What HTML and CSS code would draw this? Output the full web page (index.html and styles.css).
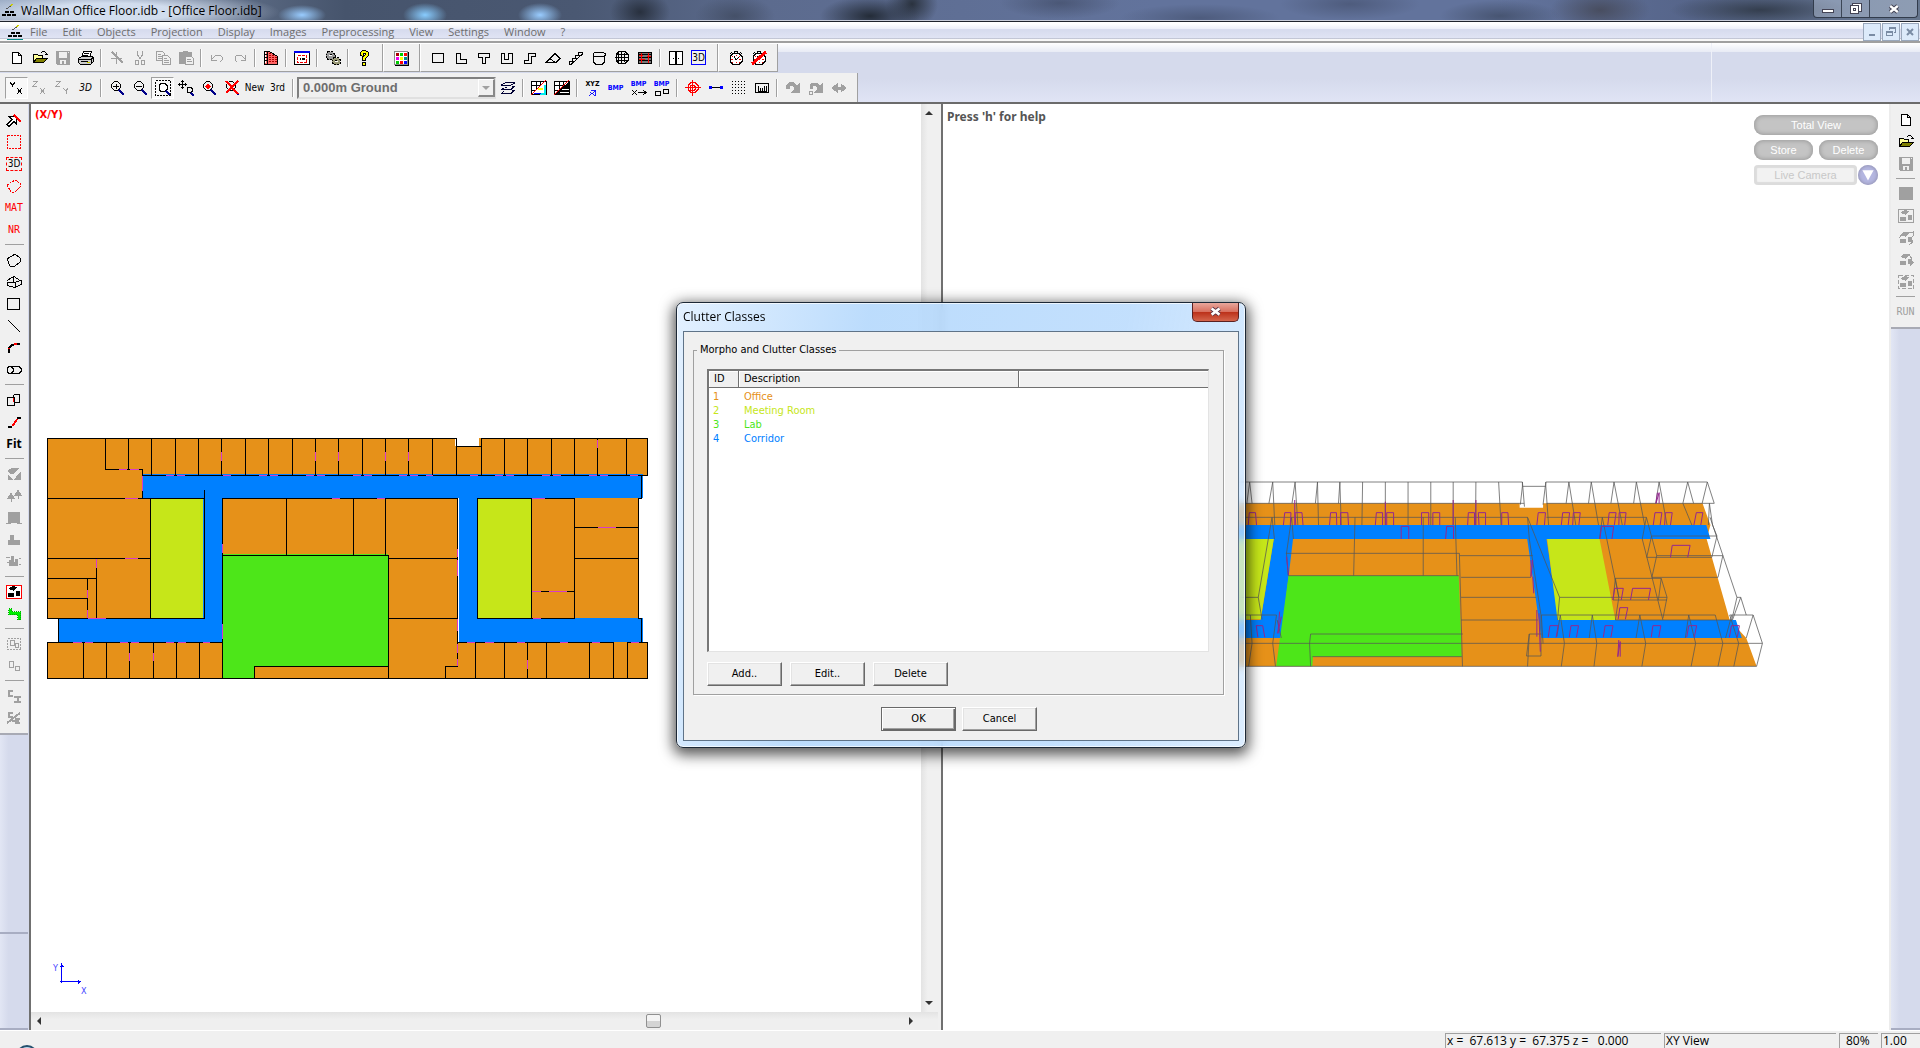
FILE: index.html
```html
<!DOCTYPE html>
<html lang="en">
<head>
<meta charset="utf-8">
<title>WallMan Office Floor.idb - [Office Floor.idb]</title>
<link rel="stylesheet" href="styles.css">
</head>
<body>
<svg class="defs" aria-hidden="true">
  <symbol id="new" viewBox="0 0 16 16"><path fill="#fff" d="M3.5 2.5h6l3 3v8h-9zM9.500 2.500v3h3"/></symbol>
  <symbol id="open" viewBox="0 0 16 16"><path fill="#ff9" d="M1.500 12.500v-8h4l1 1h4v3"/><path fill="#808000" d="M1.500 12.500l3-4h11l-4 4z"/><path d="M9 2.500h1M10 1.500h3M13 2.500h1M14 3.500h1M13 4.500h3"/></symbol>
  <symbol id="save" viewBox="0 0 16 16"><path fill="currentColor" stroke="none" fill-rule="evenodd" d="M1 1h14v14H2l-1-1zM4 2v6h8V2zM5 10v4h2v-3h2v3h2v-4zM13 2v1h1V2z"/></symbol>
  <symbol id="lens" viewBox="0 0 16 16"><path d="M5.500 1.500h3l3 3v3l-3 3h-3l-3-3v-3z"/><path stroke="#008" stroke-width="2" d="M10 10l5 5"/></symbol>
  <symbol id="clock" viewBox="0 0 16 16"><path fill="#fff" d="M5 3.500h6l3 3v5l-3 3H5l-3-3v-5z"/><path d="M6.500 1.500h3v2h-3zM1.500 4.500l2-2M14.500 4.500l-2-2"/><path stroke="#e00" d="M8 5v1M8 12v1M3 9.500h2M11 9.500h2M4 6.500h1M11 6.500h1M4 12.500h1M11 12.500h1"/><path d="M8 9.500h1M8 9.500l-2-3M9 9l2-2"/></symbol>
  <symbol id="bld" viewBox="0 0 16 16"><path fill="currentColor" stroke="none" d="M2 5l5-3 4 1-3 4zM2 9h6v4H2zM10 7h4v5h-4z"/></symbol>
  <symbol id="brick" viewBox="0 0 16 16"><path stroke="none" fill="#000" d="M4 8h4v2H4zM9 8h4v2H9zM1 11h4v2H1zM6 11h4v2H6zM11 11h4v2h-4z"/><path stroke="#555" d="M5 6l5-3"/><path stroke="#cc0" d="M9 3l3-2"/></symbol>
</svg>

<header class="title">
  <svg class="i"><use href="#brick"/></svg>
  <h1>WallMan Office Floor.idb - [Office Floor.idb]</h1>
  <div class="caption">
    <button aria-label="Minimize"><svg class="i" viewBox="0 0 16 16"><path fill="#fff" stroke="#445" d="M2.500 8.500h11v3h-11z"/></svg></button>
    <button aria-label="Restore"><svg class="i" viewBox="0 0 16 16"><path fill="#fff" stroke="#445" fill-rule="evenodd" d="M4.500 2.500h9v8h-9z"/><path fill="#fff" stroke="#445" d="M2.500 4.500h8v8h-8zM5.500 7.500h2v2h-2z"/></svg></button>
    <button class="wide" aria-label="Close"><svg class="i smooth" viewBox="0 0 16 16"><path stroke="#445" stroke-width="6" d="M3 4l10 8M13 4l-10 8"/><path stroke="#fff" stroke-width="3" d="M3 4l10 8M13 4l-10 8"/></svg></button>
  </div>
</header>

<nav class="menu">
  <svg class="i"><use href="#brick"/><path stroke="#088" d="M0 15.500h16"/></svg>
  <button>File</button><button>Edit</button><button>Objects</button><button>Projection</button><button>Display</button><button>Images</button><button>Preprocessing</button><button>View</button><button>Settings</button><button>Window</button><button>?</button>
  <div class="mdi">
    <button aria-label="Minimize document"><svg class="i" viewBox="0 0 16 16"><path stroke-width="2" d="M5 11h6"/></svg></button>
    <button aria-label="Restore document"><svg class="i" viewBox="0 0 16 16"><path d="M6.500 6v-2.500h6v5H11M6 4.500h7M3.500 7.500h6v4h-6zM3 8.500h7"/></svg></button>
    <button aria-label="Close document"><svg class="i smooth" viewBox="0 0 16 16"><path stroke-width="2" d="M5 5l6 6M11 5l-6 6"/></svg></button>
  </div>
</nav>

<div class="rebar">
<div class="row">
  <div class="band">
    <button aria-label="New"><svg class="i"><use href="#new"/></svg></button>
    <button aria-label="Open"><svg class="i"><use href="#open"/></svg></button>
    <button aria-label="Save" disabled><svg class="i"><use href="#save"/></svg></button>
    <button aria-label="Print"><svg class="i" viewBox="0 0 16 16"><path fill="#fff" d="M5.500 1.500h8l-2 6h-8zM6 3.500h5M5 5.500h5"/><path fill="#ccc" d="M.5 8.500l3-2h11l1 2v3l-3 3h-10l-2-2zM1 9.500h12v4M13 9.500l2-2M3 11.500h7"/><path stroke="#cc0" d="M9 12.500h3"/></svg></button>
    <hr>
    <button aria-label="Cut wall" disabled><svg class="i" viewBox="0 0 16 16"><path stroke-width="2" d="M3 2l5 5M8 7l6 6"/><path d="M7.500 2v12M2 8.500h11"/></svg></button>
    <button aria-label="Cut" disabled><svg class="i" viewBox="0 0 16 16"><path d="M5.500 1v4l3 4M10.500 1v4l-3 4M3.500 10.500h3v4h-3zM9.500 10.500h3v4h-3z"/></svg></button>
    <button aria-label="Copy" disabled><svg class="i" viewBox="0 0 16 16"><path d="M1.500 1.500h6l2 2v7h-8zM3 4.500h3M3 6.500h4M3 8.500h4"/><path fill="#f0f0f0" d="M7.500 5.500h5l3 3v6h-8zM9 8.500h3M9 10.500h5M9 12.500h5"/></svg></button>
    <button aria-label="Paste" disabled><svg class="i" viewBox="0 0 16 16"><path fill="currentColor" d="M1.500 2.500h12v11h-12zM5 1.500h5"/><path fill="#f0f0f0" d="M7.500 6.500h6l2 2v6h-8zM9 9.500h4M9 11.500h5"/></svg></button>
    <hr>
    <button aria-label="Undo" disabled><svg class="i" viewBox="0 0 16 16"><path d="M2.500 5v5h5M3 9l3-3 2-1h3l2 2v3l-2 2"/></svg></button>
    <button aria-label="Redo" disabled><svg class="i" viewBox="0 0 16 16"><path d="M13.500 5v5h-5M13 9l-3-3-2-1H5L3 7v3l2 2"/></svg></button>
    <hr>
    <button aria-label="Building"><svg class="i" viewBox="0 0 16 16"><path fill="#f66" d="M1.500 1.500h5l8 5v8h-13z"/><path stroke="#a00" stroke-dasharray="2 1" d="M6 3.500h2M6 5.500h5M6 7.500h8M6 9.500h8M6 11.500h8"/><path stroke="#fff" d="M2.500 2v2M2.500 5v2M2.500 8v2M2.500 11v2"/><path d="M4.500 2v12M2 4.500h2M2 7.500h2M2 10.500h2"/></svg></button>
    <hr>
    <button aria-label="Window settings"><svg class="i" viewBox="0 0 16 16"><path fill="#fff" d="M.5 1.500h15v13H.5z"/><path stroke="#00e" stroke-width="2" d="M0 2h16"/><path stroke="#e00" stroke-dasharray="3 1" d="M3.500 5.500h9v7h-9z"/><path stroke-width="2" d="M6 9h1M8 9h3"/></svg></button>
    <hr>
    <button aria-label="Preferences"><svg class="i" viewBox="0 0 16 16"><path fill="#999" stroke-dasharray="2 1" d="M3 1.500h4l3 3v3l-3 2H3l-2-2v-4z"/><path fill="#997" stroke-dasharray="2 1" d="M9 7.500h4l2 2v4l-2 1H9l-2-2v-3z"/><path stroke="#fff" d="M4 5.500h3M10 11.500h3"/><path d="M5 4.500h2M10 10.500h2"/></svg></button>
    <hr>
    <button aria-label="Help"><svg class="i" viewBox="0 0 16 16"><path fill="#ff0" d="M4.500 5.500v-3l2-2h3l3 2v3l-3 3v2h-3v-3l3-3v-1h-2v3zM6.500 12.500h3v3h-3z"/></svg></button>
  </div>
  <div class="band">
    <button aria-label="Materials"><svg class="i" viewBox="0 0 16 16"><path fill="#fff" stroke="#888" d="M1.500 1.500h13v13h-13z"/><g stroke="none"><path fill="#a00" d="M3 3h3v3H3z"/><path fill="#0c0" d="M7 3h3v3H7zM3 11h3v3H3z"/><path fill="#e0e" d="M3 7h3v3H3z"/><path fill="#ff0" d="M7 7h3v3H7z"/><path fill="#f00" d="M11 3h3v3h-3zM7 11h3v3H7z"/><path fill="#088" d="M11 7h3v3h-3z"/><path fill="#00f" d="M11 11h3v3h-3z"/></g><path d="M15.500 2v13.500H2"/></svg></button>
  </div>
  <div class="band">
    <button aria-label="Rectangle"><svg class="i" viewBox="0 0 16 16"><path d="M2.500 3.500h11v9h-11z"/></svg></button>
    <button aria-label="L shape"><svg class="i" viewBox="0 0 16 16"><path d="M3.500 3.500h4v6h6v4h-10z"/></svg></button>
    <button aria-label="T shape"><svg class="i" viewBox="0 0 16 16"><path d="M2.500 3.500h11v4h-4v6h-3v-6h-4z"/></svg></button>
    <button aria-label="U shape"><svg class="i" viewBox="0 0 16 16"><path d="M2.500 3.500h3v6h4v-6h4v10h-11z"/></svg></button>
    <button aria-label="Z shape"><svg class="i" viewBox="0 0 16 16"><path d="M6.500 3.500h7v3h-4v7h-7v-3h4z"/></svg></button>
    <button aria-label="Roof"><svg class="i" viewBox="0 0 16 16"><path d="M1 12.500l9-9 5 5-4 4zM1 12.500h11M5 8.500l5 4"/></svg></button>
    <button aria-label="Stairs"><svg class="i" viewBox="0 0 16 16"><path d="M1.500 14v-3h3v-3h3v-3h3v-3h4v2l-11 10zM4 11.500h3M7 8.500h3M10 5.500h3"/></svg></button>
    <button aria-label="Cylinder"><svg class="i" viewBox="0 0 16 16"><path d="M4 2.500h8l2 1v2l-2 1H4l-2-1v-2zM2.500 5v7l2 2h7l2-2V5"/></svg></button>
    <button aria-label="Sphere"><svg class="i" viewBox="0 0 16 16"><path d="M5 1.500h6l3 3v6l-3 3H5l-3-3v-6zM1 7.500h14M3 4.500h10M3 10.500h10M7.500 1v13M4.500 3v9M10.500 3v9"/></svg></button>
    <button aria-label="Walls"><svg class="i" viewBox="0 0 16 16"><path fill="#777" d="M1.500 2.500h13v11h-13zM2 4.500h13M2 7.500h13M2 10.500h13"/><path stroke="#f00" d="M2 5.500h4M4.500 3v10M11.500 3v10M10 6.500h4M2 9.500h6"/></svg></button>
    <hr>
    <button aria-label="Door"><svg class="i" viewBox="0 0 16 16"><path fill="#fff" d="M1.500 1.500h13v13h-13zM7.500 2v12M8.500 2v12M5 8.500h1M10 8.500h1"/></svg></button>
    <button aria-label="3D view" class="boxed">3D</button>
  </div>
  <div class="band">
    <button aria-label="Start timer"><svg class="i"><use href="#clock"/></svg></button>
    <button aria-label="Stop timer"><svg class="i" viewBox="0 0 16 16"><use href="#clock"/><path stroke="#f00" stroke-width="3" d="M1 14L15 2"/></svg></button>
  </div>
</div>
<div class="row second">
  <div class="band">
    <button aria-label="XY" class="on"><svg class="i" viewBox="0 0 16 16"><path d="M1.500 2v1l2 2v2M5.500 2v1l-2 2M8 8l5 6M13 8l-5 6"/></svg></button>
    <button aria-label="XZ" disabled><svg class="i" viewBox="0 0 16 16"><path d="M1 1.500h4L1 6.500h4M8 8l5 6M13 8l-5 6"/></svg></button>
    <button aria-label="YZ" disabled><svg class="i" viewBox="0 0 16 16"><path d="M1 1.500h4L1 6.500h4M8 8l3 3v3M13 8l-2 3"/></svg></button>
    <button class="tx it">3D</button>
    <hr>
    <button aria-label="Zoom in"><svg class="i" viewBox="0 0 16 16"><use href="#lens"/><path d="M4 6.500h6M7.500 4v5"/></svg></button>
    <button aria-label="Zoom out"><svg class="i" viewBox="0 0 16 16"><use href="#lens"/><path d="M4 6.500h6"/></svg></button>
    <button aria-label="Zoom window" class="on"><svg class="i" viewBox="0 0 16 16"><path stroke-dasharray="2 1" d="M.5.5h15v15H.5z"/><path fill="#fff" d="M6 3.500h4l2 2v4l-2 2H6l-2-2v-4z"/><path stroke="#008" stroke-width="2" d="M11 11l4 4"/></svg></button>
    <button aria-label="Pan"><svg class="i" viewBox="0 0 16 16"><path d="M4.500 0v9M0 4.500h9M3 1.500h3M3 7.500h3M1.500 3v3M7.500 3v3M10 7.500h3l1 1v3l-1 1h-3l-1-1v-3z"/><path stroke="#008" stroke-width="2" d="M13 13l3 3"/></svg></button>
    <button aria-label="Zoom point"><svg class="i" viewBox="0 0 16 16"><use href="#lens"/><path fill="#f00" stroke="#f00" d="M7 4.500l2 2-2 2-2-2z"/></svg></button>
    <button aria-label="Zoom off"><svg class="i" viewBox="0 0 16 16"><use href="#lens"/><path stroke="#f00" stroke-width="2" d="M2 1l12 13M14 1L2 13"/></svg></button>
    <button class="tx">New</button>
    <button class="tx">3rd</button>
    <hr>
    <div class="combo"><select aria-label="Floor" disabled><option>0.000m Ground</option></select><span></span></div>
    <button aria-label="Layers"><svg class="i" viewBox="0 0 16 16"><path stroke="#003" d="M5 2.500h10M1 5.500h10M14.500 3l-3 2M4.500 3l-3 2M5 7.500h2M1 9.500h10M14 6.500l-3 3M4 8l-3 2M1 13.500h10M14 10.500l-3 3M4 11.500l-3 2M12 6.500h3M12 10.500h3"/></svg></button>
    <hr>
    <button aria-label="Color fill"><svg class="i" viewBox="0 0 16 16"><path fill="#fff" d="M.5 1.500h15v13H.5zM1 5.500h9M5.500 2v8M9.500 2v4M1 10.500h4"/><path stroke="#ff0" stroke-width="2" d="M7 9h5"/><path stroke="#0ee" stroke-width="2" d="M14 5v9H9"/><path stroke="#00f" d="M3 13.500h7"/><path stroke="#f00" d="M0 15L15 0"/></svg></button>
    <button aria-label="Dark fill"><svg class="i" viewBox="0 0 16 16"><path fill="#fff" d="M.5 1.500h15v13H.5zM1 5.500h9M5.500 2v8M9.500 2v4M1 10.500h4"/><path fill="#000" d="M15 2v12H2z"/><path stroke="#fff" d="M8 9.500h7M6 12.500h9"/><path stroke="#f00" d="M0 15L15 0"/></svg></button>
    <hr>
    <button aria-label="XYZ" class="st"><span class="k">XYZ</span><svg class="i" viewBox="0 2 16 9"><path stroke="#00f" d="M3 11l8-6M6 4.500h5v5M5 7l6 4"/></svg></button>
    <button class="st">BMP</button>
    <button class="st" aria-label="BMP scale">BMP<svg class="i" viewBox="0 0 16 8"><path d="M1 2l5 5M6 2L1 7M7 4.500h8M12 2l3 2.500L12 7"/></svg></button>
    <button class="st" aria-label="BMP copy">BMP<svg class="i" viewBox="0 0 16 8"><path d="M1.500 3.500h5v4h-5zM9.500 1.500h5v4h-5z"/></svg></button>
    <hr>
    <button aria-label="Target"><svg class="i" viewBox="0 0 16 16"><path stroke="#f00" d="M6 2.500h4l3 3v4l-3 3H6l-3-3v-4zM0 7.500h16M7.500 0v16M6 5.500h3l1 1v3l-1 1H6l-1-1v-3z"/></svg></button>
    <button aria-label="Measure"><svg class="i" viewBox="0 0 16 16"><path stroke="#000" d="M3 7.500h10"/><path stroke="#00f" stroke-width="3" d="M1 7.500h3M12 7.500h3"/></svg></button>
    <button aria-label="Grid"><svg class="i" viewBox="0 0 16 16"><path stroke-dasharray="1 2" d="M1 1.500h14M1 4.500h14M1 7.500h14M1 10.500h14M1 13.500h14"/></svg></button>
    <button aria-label="Ruler"><svg class="i" viewBox="0 0 16 16"><path d="M1.500 3.500h13v9h-13zM4.500 6v5M6.500 8v3M8.500 8v3M10.500 6v5M12.500 6v5M4 11.500h9"/></svg></button>
    <hr>
    <button aria-label="Rotate" disabled><svg class="i" viewBox="0 0 16 16"><path stroke-width="4" d="M3 9V6l2-2h3l3 3"/><path fill="currentColor" d="M14 4v8H7z"/></svg></button>
    <button aria-label="Rotate around point" disabled><svg class="i" viewBox="0 0 16 16"><path stroke-width="3" d="M3 9V6l2-2h3l3 3"/><path fill="currentColor" d="M14 4v8H7z"/><path d="M1.500 11.500h3v3h-3z"/></svg></button>
    <button aria-label="Mirror" disabled><svg class="i" viewBox="0 0 16 16"><path fill="currentColor" d="M1 8l5-4v3h4V4l5 4-5 4V9H6v3z"/></svg></button>
  </div>
</div>
</div>

<main>
  <aside class="side left">
    <div class="tools">
    <button aria-label="Select"><svg class="i" viewBox="0 0 16 16"><path fill="#fff" d="M3 4.500h7v7l-2-2-5 5-2-2 5-5z"/><path stroke="#f00" stroke-width="2" d="M8 3l7 7"/></svg></button>
    <button aria-label="Select rectangle"><svg class="i" viewBox="0 0 16 16"><path stroke="#f00" stroke-dasharray="2 1" d="M1.500 1.500h13v13h-13z"/></svg></button>
    <button class="dash">3D</button>
    <button aria-label="Select polygon"><svg class="i" viewBox="0 0 16 16"><path stroke="#f00" stroke-dasharray="2 1" d="M1 7l8-5 5 3v4l-5 5H5z"/></svg></button>
    <button class="tx red">MAT</button>
    <button class="tx red">NR</button>
    <hr>
    <button aria-label="Polygon"><svg class="i" viewBox="0 0 16 16"><path d="M1 7l8-5 5 4v4l-5 4H4z"/></svg></button>
    <button aria-label="Prism"><svg class="i" viewBox="0 0 16 16"><path d="M1 6.500l7-4 6 4-5 2H1v3l8 2 6-3V6M9.500 8v5M7.500 3v5"/></svg></button>
    <button aria-label="Square"><svg class="i" viewBox="0 0 16 16"><path d="M1.500 2.500h12v11h-12z"/></svg></button>
    <button aria-label="Line"><svg class="i" viewBox="0 0 16 16"><path d="M2 2l12 12"/></svg></button>
    <button aria-label="Arc"><svg class="i" viewBox="0 0 16 16"><path stroke-width="2" d="M3 13V8l3-3 4-1h4"/><path stroke="#f00" stroke-width="2" d="M3 9v-1M8 4h3"/></svg></button>
    <button aria-label="Tube"><svg class="i" viewBox="0 0 16 16"><path d="M3 4.500h10l2 2v3l-2 2H3l-2-2v-3zM5 4.500l2 2v3l-2 2"/></svg></button>
    <hr>
    <button aria-label="Copy object"><svg class="i" viewBox="0 0 16 16"><path d="M1.500 5.500h7v8h-7zM7.500 2.500h6v8h-5M7.500 3v3"/><path stroke="#f00" d="M7.500 6v4"/></svg></button>
    <button aria-label="Move corner"><svg class="i" viewBox="0 0 16 16"><path stroke-width="2" d="M2 13h4M11 4h4"/><path stroke="#f00" stroke-width="2" d="M6 12l2-2 3-5"/></svg></button>
    <button class="tx big">Fit</button>
    <hr>
    <button aria-label="Terrain" disabled><svg class="i" viewBox="0 0 16 16"><path fill="currentColor" d="M2 5l5-3h6l-5 5H4zM2 9l4 4H2zM14 7v6H9z"/></svg></button>
    <button aria-label="Trees" disabled><svg class="i" viewBox="0 0 16 16"><path fill="currentColor" d="M5 5l3 5H2zM12 2l3 5H9zM5.500 10v4M12.500 7v4"/></svg></button>
    <button aria-label="House" disabled><svg class="i" viewBox="0 0 16 16"><path fill="currentColor" d="M2.500 2.500h11v10h-11zM0 13.500h5M11 13.500h5"/></svg></button>
    <button aria-label="City" disabled><svg class="i" viewBox="0 0 16 16"><path fill="currentColor" d="M2.500 12.500v-4h2v-5h3v5h6v4z"/></svg></button>
    <button aria-label="City cut" disabled><svg class="i" viewBox="0 0 16 16"><path fill="currentColor" d="M3.500 6.500v5h8v-6h-2v3h-2v-6h-2v4zM0 3.500h4M13 4.500h2M1 8.500h3M13 10.500h2"/></svg></button>
    <hr>
    <button aria-label="Preview"><svg class="i" viewBox="0 0 16 16"><path fill="#fff" stroke="#f00" d="M.5 1.500h15v13H.5z"/><use href="#bld"/></svg></button>
    <button aria-label="Corridor"><svg class="i" viewBox="0 0 16 16"><path fill="#0e0" stroke="#0a0" stroke-dasharray="1 1" d="M2.500 2.500h3v3h9v8h-3v-5h-9z"/></svg></button>
    <hr>
    <button aria-label="Group" disabled><svg class="i" viewBox="0 0 16 16"><path stroke-dasharray="2 1" d="M1.500 2.500h13v11h-13z"/><path d="M4.500 4.500h4v5h-4zM9.500 7.500h3v4h-3z"/></svg></button>
    <button aria-label="Ungroup" disabled><svg class="i" viewBox="0 0 16 16"><path d="M3.500 3.500h4v6h-4zM9.500 8.500h4v4h-4z"/></svg></button>
    <hr>
    <button aria-label="Combine" disabled><svg class="i" viewBox="0 0 16 16"><path stroke-width="2" d="M7 3H3v5h4M8 9h7M11.500 9v5M8 14h7"/></svg></button>
    <button aria-label="Split" disabled><svg class="i" viewBox="0 0 16 16"><path stroke-width="2" d="M7 3H3v4h4M9 9h5M9 13h5M1 13L14 3M6 11h7"/></svg></button>
    </div>
    <div class="fill"></div><div class="fill"></div>
  </aside>

  <section class="pane plan">
    <div class="view">
      <span class="tag">(X/Y)</span>
      <svg class="floor" viewBox="0 0 1568 840" preserveAspectRatio="none">
        <g fill="#e69119"><path d="M43 55H1041V79H1100V55H1513V166H276V235H43zM43 235H295V595H43zM471 235H1048V667H471zM1228 235H1491V595H1228zM43 667H471V775H43zM550 739H878V775H550zM878 595H1048V667H1513V775H878z"/></g>
        <path fill="#0080ff" d="M276 162H1501V235H1098V595H1501V667H1051V235H471V667H70V595H425V235H276z"/>
        <path fill="#c6e619" d="M295 235H425V595H295zM1098 235H1228V595H1098z"/>
        <path fill="#4de619" d="M471 403H876V739H550V775H471z"/>
        <path class="wall" d="M43 55H1045V79H1105V55H1513V166H1497V235H1491V595H1498V667H1513V775H43V667H70V595H43zM185 55V148H276V235M241 55V148M297 55V166M356 55V166M413 55V166M469 55V166M528 55V166M585 55V166M643 55V166M699 55V166M756 55V166M814 55V166M871 55V166M927 55V166M986 55V166M1045 79V166M1105 79V166M1162 55V166M1219 55V166M1277 55V166M1334 55V166M1390 55V166M1461 55V166M276 166H1497M43 235H427V210V595H70M295 235V595M43 415H295M43 475H163M43 535H141V475M141 535V595M163 415V595M471 775V235H1048V595M629 235V405M792 235V405M871 235V405M471 406H878V775M878 415H1048M878 595H1048V739H1018V775M550 775V739H878M1097 235V595H1334V235H1097M1228 235V595M1228 514H1334M1334 322H1491M1334 415H1491M70 667H471M131 667V775M187 667V775M244 667V775M302 667V775M359 667V775M415 667V775M1048 667H1429V775M1464 775V667H1498M1091 667V775M1162 667V775M1219 667V775M1265 667V775M1371 667V775"/>
        <path class="door" d="M218 148H238M246 148H266M276 168V212M233 235H265M233 415H265M163 417V444M141 510V534M141 571V595M142 595H186M105 667H127M135 667H154M220 667H240M247 667H267M333 667H353M363 667H382M424 667H440M244 699V723M302 699V723M471 372V399M471 612V657M469 96V123M699 96V123M756 96V123M871 96V123M927 96V123M333 166H353M360 166H379M473 166H492M561 166H581M588 166H608M676 166H696M703 166H722M791 166H811M819 166H838M904 166H924M932 166H951M969 166H988M1079 166H1098M1140 166H1160M1167 166H1186M1255 166H1274M1281 166H1301M1370 166H1389M1396 166H1415M1470 166H1490M1390 60V84M740 235H759M850 235H869M1230 235H1262M1392 322H1436M1230 514H1252M1272 514H1316M1232 595H1252M1048 387V411M1048 420V467M1048 598V632M1048 672V699M1048 717V738M1071 667H1090M1115 667H1137M1193 667H1212M1298 667H1318M1377 667H1396M1472 667H1491M1219 720V747"/>
      </svg>
      <svg class="axes" viewBox="0 0 40 36"><path fill="none" stroke="#00f" stroke-width="1" shape-rendering="crispEdges" d="M9.500 2v20M8 20.500h21M7.500 5.500h4M8.500 4.500h2M26.500 18.500v4M27.500 19.500v2"/><text x="1" y="10">Y</text><text x="29" y="33">X</text></svg>
    </div>
    <div class="vbar"><i class="up"></i><i class="down"></i></div>
    <div class="hbar"><i class="lt"></i><b></b><i class="rt"></i></div>
  </section>
  <div class="split"></div>
  <section class="pane scene">
    <span class="hint">Press 'h' for help</span>
    <div class="cams">
      <button class="two">Total View</button>
      <div><button>Store</button><button>Delete</button></div>
      <div class="live"><button>Live Camera</button><i><svg class="i smooth" viewBox="0 0 20 20"><path fill="#fff" stroke="none" d="M3 4h14l-7 13z"/></svg></i></div>
    </div>
    <svg class="persp" viewBox="0 0 1568 690" preserveAspectRatio="none">
      <path fill="#e69119" d="M-60 130H812V143H880V130H1343L1366 195L1355 237L1422 480L1470 534L1500 619H-60z"/>
      <path fill="#0080ff" d="M-60 195H1354L1366 237H890L925 480H1440L1457 534H875L834 237H154L120 534H-60V480H60L98 237H-60z"/>
      <path fill="#c6e619" d="M-60 237H98L60 478H-60zM892 237H1044L1090 480H922z"/>
      <path fill="#4de619" d="M141 347H635L644 590H212L210 619H105z"/>
      <path class="wire" d="M-60 66H820V79H888V66H1357L1377 130H890M-60 130H825M-60 172H835M-60 550H1517L1500 619H-60M820 66L826 140M820 79L814 134M888 66L880 134M888 79L896 195M95 66L84 130M95 66L101 195M160 66L151 130M160 66L168 195M225 66L219 130M225 66L228 195M290 66L286 130M290 66L294 195M356 66L354 195M422 66V195M488 66V195M554 66V195M619 66V195M685 66L684 195M751 66L758 195M955 66L947 130M955 66L975 195M1020 66L1012 130M1020 66L1041 195M1086 66L1077 130M1086 66L1110 195M1151 66L1143 130M1151 66L1175 195M1217 66L1207 130M1217 66L1240 195M1300 66L1286 130L1312 195M1300 66L1317 130M1357 66L1342 130M28 66L20 130M28 66L35 130M1363 130L1372 195L1385 228L1370 292M1360 195L1363 130M93 172L100 237M93 172L53 412L64 478M-60 412H53M-60 465H106L95 550L103 619M150 172L155 237M150 172L135 280L140 347M334 172L330 347M532 172V347M625 172L630 347M133 280H637L646 619M141 347H635M638 287H850M642 352H845M642 412H860M642 480H865M835 172L840 237L874 465V588H832L840 522H875M835 172L928 412L922 480M890 172H1180M928 412H1240M1052 172L1044 237M1052 172L1100 412L1090 480M1180 172L1168 237L1228 480M1180 172L1210 287M1195 228H1385M1195 228L1181 292H1370M1210 287H1402L1388 352H1196L1210 287M1365 172L1443 412L1428 480H1090M1090 355H1223L1240 412L1228 475M1090 355L1083 420H1240M1090 355L1100 412M1223 355L1215 420M1443 412H1454L1470 465M875 465H1380M1422 465H1490L1517 550M1490 465L1470 534M930 465L942 550L933 619M930 465L920 530M1023 465L1036 550L1028 619M1023 465L1014 534M1161 465L1178 550L1167 619M1161 465L1150 534M1303 465L1323 550L1310 619M1303 465L1293 534M1380 465L1402 550L1388 619M1422 465L1448 550L1434 619M1428 465L1410 534M1454 412L1430 480M205 619L202 550L205 522H647M210 590H644M120 534L108 480M875 465L880 550M840 522L835 619M30 465L35 550L25 619"/>
      <path class="wdoor" d="M24 195L27 158H45L48 195M126 195L130 158H148L146 195M162 195L160 158H180L183 195M260 195L263 158H280L281 195M292 195V158H313L315 195M393 195L396 158H414V195M426 195V158H446V195M527 195V158H548V195M560 195V158H580V195M661 195L663 158H681V195M694 195L692 158H713V195M760 195V158H778L780 195M862 195L866 158H887L884 195M933 195L937 158H957L953 195M966 195L968 158H988L984 195M1068 195L1072 158H1092L1087 195M1100 195L1101 158H1121L1117 195M1200 195L1205 158H1225L1220 195M1233 195L1235 158H1255L1250 195M1318 195L1325 158H1344L1338 195M468 237V199H490V237M597 237L600 199H620V237M1045 237L1050 199H1085L1080 237M1250 292L1255 256H1307L1300 292M1083 420L1088 385H1113L1107 420M1134 420L1140 385H1192L1186 420M1098 478L1103 443H1126L1119 478M52 532L47 497H66L72 532M895 532L900 497H924L918 532M956 532L961 497H983L977 532M1055 532L1060 497H1083L1077 532M1194 532L1199 497H1222L1216 532M1297 532L1303 497H1326L1319 532M1421 532L1427 497H1450L1444 532M159 120V195M422 125V195M619 120V195M685 120V195M1212 98L1208 130L1217 98V130M135 290L141 345M115 455L110 520L120 470M845 300V350L850 300M850 350L853 400M862 450V530M868 460L872 575M1100 540L1097 590L1104 545V590"/>
    </svg>
  </section>
  <aside class="side right">
    <div class="tools">
    <button aria-label="New project"><svg class="i"><use href="#new"/></svg></button>
    <button aria-label="Open project"><svg class="i"><use href="#open"/></svg></button>
    <button aria-label="Save project" disabled><svg class="i"><use href="#save"/></svg></button>
    <hr>
    <button aria-label="Stop" disabled><svg class="i" viewBox="0 0 16 16"><path fill="currentColor" d="M1.500 1.500h13v12h-13z"/></svg></button>
    <button aria-label="Area" disabled><svg class="i" viewBox="0 0 16 16"><use href="#bld"/><path d="M.5 1.500h15v13H.5z"/></svg></button>
    <button aria-label="Polygon area" disabled><svg class="i" viewBox="0 0 16 16"><use href="#bld"/><path d="M1 8l4-5 10-1v4l-2 2 2 4-4 3"/></svg></button>
    <button aria-label="Hull area" disabled><svg class="i" viewBox="0 0 16 16"><use href="#bld"/><path d="M5 2.500h6l2 3v3l2 2-3 3"/></svg></button>
    <button aria-label="Dashed area" disabled><svg class="i" viewBox="0 0 16 16"><use href="#bld"/><path stroke-dasharray="4 2" d="M.5 1.500h15v13H.5z"/></svg></button>
    <hr>
    <button class="tx" disabled>RUN</button>
    </div>
    <div class="fill"></div>
  </aside>
</main>

<footer>
  <i class="orb"></i>
  <span class="xyz">x =  67.613 y =  67.375 z =   0.000</span>
  <span class="mode">XY View</span>
  <span class="pct">80%</span>
  <span class="fac">1.00</span>
</footer>

<div class="dialog" role="dialog" aria-labelledby="dt">
  <div class="dhead"><h2 id="dt">Clutter Classes</h2><button aria-label="Close dialog"><svg class="i smooth" viewBox="0 0 16 16"><path stroke="#534" stroke-width="5" d="M3 4l9 7M12 4l-9 7"/><path stroke="#fff" stroke-width="3" d="M3 4l9 7M12 4l-9 7"/></svg></button></div>
  <div class="dbody">
    <fieldset>
      <legend>Morpho and Clutter Classes</legend>
      <div class="list">
        <table>
          <thead><tr><th class="id">ID</th><th class="desc">Description</th><th></th></tr></thead>
          <tbody>
            <tr class="c1"><td>1</td><td>Office</td><td></td></tr>
            <tr class="c2"><td>2</td><td>Meeting Room</td><td></td></tr>
            <tr class="c3"><td>3</td><td>Lab</td><td></td></tr>
            <tr class="c4"><td>4</td><td>Corridor</td><td></td></tr>
          </tbody>
        </table>
      </div>
      <div class="acts"><button>Add..</button><button>Edit..</button><button>Delete</button></div>
    </fieldset>
    <div class="ends"><button class="def">OK</button><button>Cancel</button></div>
  </div>
</div>
</body>
</html>
```
FILE: styles.css
```css
* { box-sizing: border-box; }
body {
  margin: 0; min-height: 100vh; display: flex; flex-direction: column; position: relative;
  overflow: hidden; background: #f0f0f0; color: #000;
  font: 12px/16px "Open Sans", "Noto Sans", sans-serif;
}
button { font: inherit; color: inherit; background: none; border: 0; padding: 0; }
h1, h2 { margin: 0; font-weight: 400; }
.defs { display: none; }
.i { width: 16px; height: 16px; display: block; fill: none; stroke: currentColor; shape-rendering: crispEdges; flex: none; overflow: visible; }
.smooth { shape-rendering: auto; }

/* title bar */
.title {
  height: 22px; display: flex; align-items: center; border-bottom: 1px solid #20242c; padding-left: 1px;
  background:
    linear-gradient(transparent 20px, #c8ccd8 20px),
    radial-gradient(ellipse 170px 22px at 110px 12px, rgba(215,226,242,.95) 40%, transparent),
    radial-gradient(ellipse 24px 10px at 302px 15px, #9cf, transparent),
    radial-gradient(ellipse 22px 12px at 425px 15px, #8cf, transparent),
    radial-gradient(ellipse 22px 12px at 540px 15px, #9cf, transparent),
    radial-gradient(ellipse 30px 22px at 640px 12px, #28303e, transparent),
    radial-gradient(ellipse 40px 20px at 735px 16px, rgba(60,70,90,.7), transparent),
    radial-gradient(ellipse 50px 20px at 870px 16px, #242c38, transparent),
    radial-gradient(ellipse 26px 24px at 912px 4px, #2a323e, transparent),
    radial-gradient(ellipse 60px 16px at 1060px 3px, rgba(60,70,95,.6), transparent),
    radial-gradient(ellipse 80px 14px at 1200px 18px, rgba(64,76,104,.6), transparent),
    radial-gradient(ellipse 70px 16px at 1350px 4px, rgba(70,82,112,.7), transparent),
    radial-gradient(ellipse 60px 16px at 1500px 16px, rgba(60,72,96,.7), transparent),
    radial-gradient(ellipse 50px 22px at 1600px 10px, rgba(70,74,90,.9), transparent),
    radial-gradient(ellipse 90px 16px at 1760px 10px, #343e4e, transparent),
    linear-gradient(90deg, #8a9cb8, #46546c 18%, #4a5872 30%, #5c6b8e 40%, #62739c 60%, #62739c 78%, #56658a 88%, #66768e);
}
.title h1 { flex: 1; padding-left: 4px; font-size: 12px; }
.caption { display: flex; align-self: flex-start; height: 18px; margin-right: 2px; border: 1px solid #323c4c; border-top: 0; border-radius: 0 0 4px 4px; background: rgba(190,205,225,.45); }
.caption button { width: 28px; height: 17px; display: grid; place-items: center; border-right: 1px solid #3c4656; }
.caption .wide { width: 47px; border: 0; }
.caption .wide .i { width: 12px; height: 12px; }

/* menu */
.menu { height: 21px; display: flex; align-items: center; gap: 15px; padding-left: 7px; border-bottom: 2px solid #a0a0a0; color: #6d6d6d; font-size: 11px; background: linear-gradient(#fff 0 10%, #eef0f9 35%, #d6dbee 40%, #e0e4f4 85%, #b4b9cc 86%, #f8f8f8 90%); }
.menu > .i { margin-right: -8px; }
.mdi { margin-left: auto; display: flex; gap: 1px; color: #7a8ca4; padding-right: 1px; }
.mdi button { width: 18px; height: 18px; display: grid; place-items: center; background: #dceafa; border: 1px solid #9aa8bc; }

/* toolbars */
.rebar {
  height: 61px; border-bottom: 2px solid #6b6b6b;
  background:
    linear-gradient(#eef0f8, #eef0f8) 1711px 0 / 1px 100% no-repeat,
    linear-gradient(#fff, #e8ebf5 15%, #d5daec 16%, #d5daec 60%, #e0e4f5);
}
.row { display: flex; height: 29px; padding-top: 1px; }
.second { height: 30px; }
.band { display: flex; align-items: center; padding: 0 7px 0 5px; background: #f0f0f0; border-right: 1px solid #a0a0a0; border-bottom: 1px solid #a0a0a0; }
.band + .band { border-left: 1px solid #fff; }
.band button { width: 23px; height: 22px; display: grid; place-items: center; }
.band hr { width: 2px; height: 18px; margin: 0 3px; border: 0; background: #a0a0a0; border-right: 1px solid #fff; flex: none; }
.second .band { border-bottom: 0; }
button:disabled { color: #a0a0a0; }
.band .on { background: #f8f8f8; border: 1px solid #a0a0a0; border-right-color: #fff; border-bottom-color: #fff; }
.tx { font: 10px/12px "DejaVu Sans Mono", monospace; }
.band .tx { font: 10px/12px "DejaVu Sans Condensed", sans-serif; }
.band .it { font-style: italic; }
.band .boxed { width: 15px; height: 15px; margin: 0 4px; border: 1px solid #00f; font: 10px/12px "DejaVu Sans Condensed", sans-serif; }
.band .st { display: flex; flex-direction: column; align-items: center; justify-content: center; font: 700 7px/8px "DejaVu Sans Condensed", sans-serif; color: #00f; }
.st .i { height: 8px; color: #000; }
.k { color: #000; }
.combo { position: relative; width: 199px; height: 22px; margin: 1px 0 0; }
.combo select { appearance: none; width: 100%; height: 100%; margin: 0; padding: 0 4px; border: 2px solid #808080; border-right-color: #e0e0e0; border-bottom-color: #e0e0e0; border-radius: 0; background: #f0f0f0; color: #6d6d6d; opacity: 1; font: 700 13px/16px "Liberation Sans", sans-serif; }
.combo span { position: absolute; right: 1px; top: 2px; width: 17px; height: 18px; background: #f0f0f0; border: 1px solid #fff; border-right: 2px solid #888; border-bottom: 2px solid #888; display: grid; place-items: center; }
.combo span::after { content: ""; border: 4px solid transparent; border-top-color: #a0a0a0; border-bottom: 0; }

/* workspace */
main { flex: 1; display: flex; min-height: 0; }
.side { display: flex; flex-direction: column; flex: none; background: #d5daec; }
.tools { background: #f0f0f0; border-bottom: 2px solid #a8aab4; display: flex; flex-direction: column; align-items: center; flex: none; }
.tools hr { height: 1px; width: 19px; margin: 3px 0 4px; border: 0; background: #a0a0a0; flex: none; }
.left { width: 31px; border-right: 2px solid #707070; padding-right: 1px; }
.tools { padding: 5px 0 4px; }
.tools button { height: 22px; width: 28px; display: grid; place-items: center; flex: none; }
.left .tools .tx { font: 10px/12px "DejaVu Sans Mono", monospace; }
.left .tools .red { color: #f00; }
.left .tools .big { font: 700 12px/14px "Noto Sans", sans-serif; }
.left .tools .dash { width: 16px; height: 14px; margin: 4px 0; border: 1px dashed #f00; font: 10px/12px "DejaVu Sans Condensed", sans-serif; }
.fill { flex: 1; background: linear-gradient(90deg, #e2e6f4, #d5daec 30%); border-bottom: 2px solid #a8adc2; }
.left .fill:last-child { flex: 0 0 96px; }
.right { width: 29px; }
.pane { background: #fff; position: relative; min-width: 0; }
.plan { flex: 0 0 907px; display: grid; grid-template: 1fr 18px / 1fr 17px; }
.view { position: relative; }
.tag { position: absolute; left: 4px; top: 4px; color: #f00; font: 700 10px/14px "DejaVu Sans", sans-serif; }
.floor { position: absolute; left: -1px; top: 316px; width: 640px; height: 280px; }
.floor path { shape-rendering: crispEdges; }
.wall { fill: none; stroke: #000; vector-effect: non-scaling-stroke; }
.door { fill: none; stroke: #d63cc8; vector-effect: non-scaling-stroke; }
.axes { position: absolute; left: 21px; bottom: 15px; width: 40px; height: 36px; fill: #44f; font: 9px "DejaVu Sans Condensed", sans-serif; }
.vbar { background: linear-gradient(90deg, #e3e3e3, #f0f0f0 40%); display: flex; flex-direction: column; justify-content: space-between; align-items: center; padding: 7px 2px 7px 0; }
.hbar { grid-column: 1 / 3; background: linear-gradient(#e3e3e3, #efefef 40%); display: flex; align-items: center; padding: 0 25px 0 6px; }
.hbar b { width: 15px; height: 14px; margin-left: 605px; margin-right: auto; border: 1px solid #909090; border-radius: 2px; background: linear-gradient(#f4f4f4 50%, #d4d4d4 50%); }
.vbar i, .hbar i { border: 4px solid transparent; }
.vbar .up { border-bottom-color: #333; border-top: 0; }
.vbar .down { border-top-color: #333; border-bottom: 0; }
.hbar .lt { border-right-color: #333; border-left: 0; }
.hbar .rt { border-left-color: #333; border-right: 0; }
.split { width: 5px; flex: none; background: #f0f0f0; border-right: 2px solid #707070; }
.scene { flex: 1; border-right: 2px solid #ececec; }
.hint { position: absolute; left: 4px; top: 5px; color: #555; font: 700 12px/16px "Noto Sans", sans-serif; }
.persp { position: absolute; left: 297px; top: 356px; width: 540px; height: 230px; overflow: visible; }
.wire { fill: none; stroke: #555; stroke-opacity: .75; vector-effect: non-scaling-stroke; }
.wdoor { fill: none; stroke: #93278f; vector-effect: non-scaling-stroke; }
.cams { position: absolute; right: 11px; top: 11px; width: 124px; display: flex; flex-direction: column; gap: 5px; font: 11px/16px "Liberation Sans", sans-serif; color: #fff; }
.cams div { display: flex; gap: 6px; }
.cams button { flex: 1; height: 20px; border-radius: 9px; background: #c4c4c4; box-shadow: inset 0 0 4px 1px #9c9c9c; }
.cams .two { flex: none; }
.cams .live { gap: 1px; }
.cams .live button { border-radius: 4px; background: #f2f2f2; color: #c8c8c8; box-shadow: inset 0 0 1px 3px #dcdcdc; }
.cams .live i { width: 20px; height: 20px; border-radius: 50%; background: #b4b6e0; box-shadow: inset 0 0 3px 1px #9898b8; display: grid; place-items: center; }

/* status bar */
footer { height: 18px; display: flex; gap: 3px; padding-top: 2px; border-top: 1px solid #fff; justify-content: flex-end; position: relative; }
footer span { border: 1px solid #a0a0a0; border-width: 1px 0 0 1px; padding-left: 1px; white-space: pre; line-height: 14px; }
.xyz { width: 216px; }
.mode { width: 172px; }
.pct { width: 39px; }
footer .pct { padding-left: 6px; }
.fac { width: 39px; }
.orb { position: absolute; left: 16px; top: 14px; width: 22px; height: 22px; border-radius: 50%; border: 2px solid #25506e; background: #b8d8ee; }

/* dialog */
.dialog {
  position: absolute; left: 2px; right: 0; top: 302px; width: 570px; height: 446px; margin: 0 auto; padding: 0 6px 7px;
  display: flex; flex-direction: column; border: 1px solid #1c2836; border-radius: 7px;
  background: linear-gradient(100deg, rgba(222,238,255,.85), rgba(176,214,252,.85) 30%, rgba(184,218,253,.85) 70%, rgba(206,230,255,.7));
  backdrop-filter: blur(4px);
  box-shadow: inset 0 0 0 1px rgba(255,255,255,.7), 0 4px 14px 3px rgba(0,0,0,.65);
  font: 11px/14px "DejaVu Sans Condensed", sans-serif;
}
.dhead { height: 28px; display: flex; justify-content: space-between; }
.dhead h2 { font: 12px/28px "Open Sans", "Noto Sans", sans-serif; }
.dhead button { width: 47px; height: 19px; display: grid; place-items: center; border: 1px solid #5a2020; border-top: 0; border-radius: 0 0 5px 5px; background: linear-gradient(#e8a79c, #d8705f 48%, #bb2f18 50%, #d4654c); }
.dhead .i { width: 14px; height: 14px; }
.dbody { flex: 1; display: flex; flex-direction: column; border: 1px solid #5f7388; background: #f0f0f0; padding: 11px 14px 9px 9px; }
fieldset { margin: 0; min-width: 0; height: 352px; padding: 12px 14px 0 13px; border: 1px solid #a0a0a0; box-shadow: 1px 1px 0 #fff; }
legend { margin-left: -10px; padding: 0 3px; }
.list { height: 283px; background: #fff; border: 2px solid #a0a0a0; border-right: 1px solid #e3e3e3; border-bottom: 1px solid #e3e3e3; border-top-color: #777; border-left-color: #777; }
table { width: 100%; border-collapse: separate; border-spacing: 0; table-layout: fixed; }
th { height: 17px; padding: 0 5px; text-align: left; font-weight: 400; line-height: 14px; background: #f0f0f0; border-right: 1px solid #707070; border-bottom: 1px solid #707070; box-shadow: inset 1px 1px 0 #fff; }
th:last-child { border-right: 0; }
.id { width: 30px; }
.desc { width: 280px; }
td { height: 14px; padding: 0 5px; line-height: 14px; }
td:first-child { padding: 0 4px; }
tbody tr:first-child td { height: 16px; padding-top: 2px; }
.c1 { color: #e69119; }
.c2 { color: #c6e619; }
.c3 { color: #4de619; }
.c4 { color: #0080ff; }
.acts { display: flex; gap: 8px; margin-top: 10px; }
.ends { display: flex; gap: 6px; margin: 12px 0 0 188px; }
.acts button, .ends button { width: 75px; height: 24px; border: 1px solid #fff; border-right-color: #696969; border-bottom-color: #696969; box-shadow: inset -1px -1px 0 #a0a0a0, inset 1px 1px 0 #e3e3e3; background: #f0f0f0; }
.ends .def { border: 1px solid #696969; box-shadow: inset 1px 1px 0 #fff, inset -1px -1px 0 #696969, inset -2px -2px 0 #a0a0a0; }
```
